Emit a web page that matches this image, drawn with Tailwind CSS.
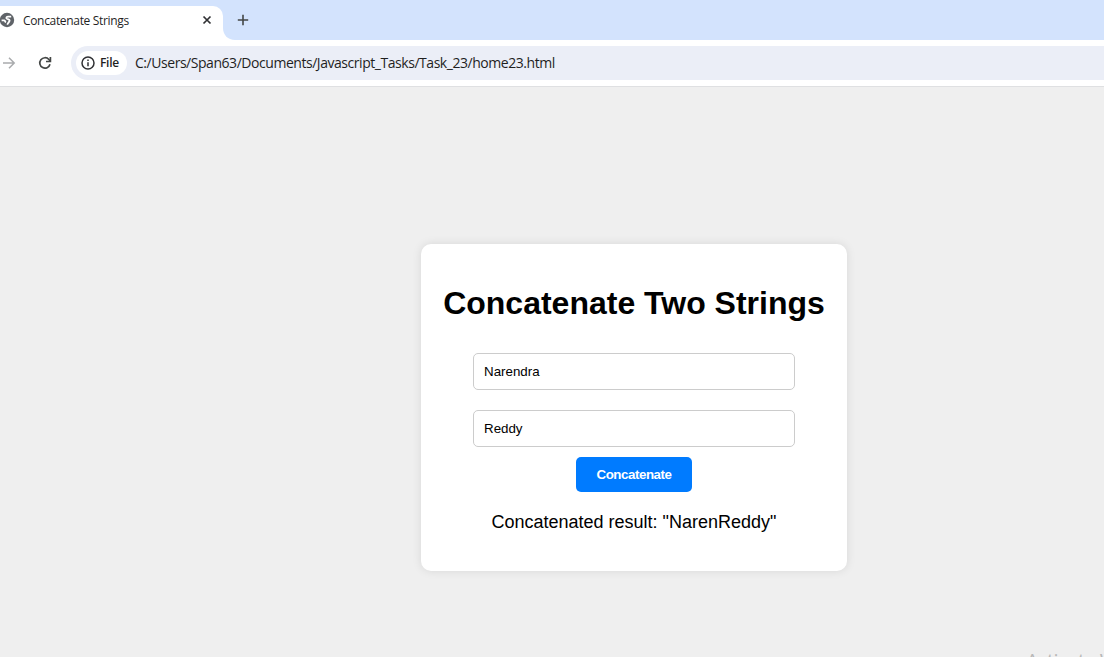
<!DOCTYPE html>
<html lang="en">
<head>
<meta charset="utf-8">
<title>Concatenate Strings</title>
<script src="https://cdn.jsdelivr.net/npm/@tailwindcss/browser@4"></script>
</head>
<body class="relative flex h-[657px] w-[1104px] flex-col overflow-hidden bg-[#efefef] font-['Liberation_Sans',Arial,sans-serif] text-black">
  <header class="shrink-0 font-['Open_Sans','Noto_Sans',sans-serif] text-[#1f1f1f]">
    <div class="flex h-10 items-end bg-[#d3e3fd]">
      <div class="flex h-[34px] w-[223px] items-center rounded-tr-[10px] bg-white pb-[5px]">
        <svg class="-ml-px mb-px size-[16px] shrink-0" viewBox="0 0 16 16"><circle cx="8" cy="8" r="7.200" fill="#5f6368"/><path d="M12.200 4.600H9.200C7.600 4.600 7 5.600 7.600 6.500 8.200 7.300 9.600 7 10.300 7.800 11.200 8.900 10 10 9.300 10.800L8.200 12.600M2.600 8.300H5.200C6.200 8.600 6 9.800 7 10.200" fill="none" stroke="#fff" stroke-width="1.800"/></svg>
        <span class="ml-[8px] w-[179px] whitespace-nowrap text-[12px] leading-4 tracking-[-0.33px]">Concatenate Strings</span>
        <svg class="mb-px size-[10px] shrink-0" viewBox="0 0 10 10" fill="none" stroke="#303134" stroke-width="1.7"><path d="m1.500 1.500 7 7m0-7-7 7"/></svg>
      </div>
      <svg class="h-3 w-3 shrink-0" viewBox="0 0 12 12"><path d="M0 0v12h12C5 12 0 7 0 0Z" fill="#fff"/></svg>
      <svg class="mb-[14px] ml-[2px] size-[12px]" viewBox="0 0 12 12" fill="none" stroke="#444746" stroke-width="1.600"><path d="M6 .8v10.400M.8 6h10.400"/></svg>
    </div>
    <div class="flex h-[47px] items-start border-b border-[#dfe0e2] bg-white pt-[6px]">
      <svg class="ml-[2px] mt-[10px] size-[14px]" viewBox="0 0 14 14" fill="none" stroke="#a9abad" stroke-width="1.500"><path d="M1 7h11M7 1.800 12.200 7 7 12.200"/></svg>
      <svg class="ml-[22px] mt-[10px] size-[14px]" viewBox="0 0 14 14" fill="none" stroke="#444746" stroke-width="1.700"><path d="M12 8.300A5.200 5.200 0 1 1 10.900 3.500L12.200 4.900"/><path d="M12.400 1v4.500H8"/></svg>
      <div class="ml-[19px] flex h-[34px] flex-1 items-center rounded-l-full bg-[#ebeef7] pl-[5px]">
        <div class="flex h-6 w-[51px] items-center rounded-full bg-white pl-[5px]">
          <svg class="size-[14px]" viewBox="0 0 14 14" fill="none" stroke="#303134" stroke-width="1.500"><circle cx="7" cy="7" r="6"/><path d="M7 6.200v4M7 3.600v1.500"/></svg>
          <span class="ml-[5px] whitespace-nowrap text-[12px] font-semibold leading-4 tracking-[-0.3px]">File</span>
        </div>
        <span class="ml-[8px] whitespace-nowrap text-[14px] leading-5 tracking-[-0.456px]">C:/Users/Span63/Documents/Javascript_Tasks/Task_23/home23.html</span>
      </div>
    </div>
  </header>
  <main class="flex flex-1 flex-col items-center pl-[164px] pt-[157px]">
    <section class="flex h-[327px] w-[426px] flex-col items-center rounded-[10px] bg-white pt-[41px] shadow-[0_0_10px_rgba(0,0,0,0.1)]">
      <h1 class="whitespace-nowrap text-[32px] font-bold leading-[37px]">Concatenate Two Strings</h1>
      <input class="mt-[31px] h-[37px] w-[322px] rounded-[5px] border border-[#ccc] bg-white px-[10px] text-[13.333px]" value="Narendra">
      <input class="mt-5 h-[37px] w-[322px] rounded-[5px] border border-[#ccc] bg-white px-[10px] text-[13.333px]" value="Reddy">
      <button class="mt-[10px] h-[35px] w-[116px] rounded-[5px] bg-[#007bff] text-[13.333px] font-bold leading-[15px] tracking-[-0.45px] text-white">Concatenate</button>
      <p class="mt-5 whitespace-nowrap text-[18px] leading-5">Concatenated result: "NarenReddy"</p>
    </section>
  </main>
  <div class="absolute right-0 top-[647px] h-[10px] w-[78px] overflow-hidden whitespace-nowrap font-['Open_Sans',sans-serif] text-[20px] leading-[27px] tracking-[-0.6px] text-[#b8b8b8]">Activate Windows</div>
</body>
</html>
